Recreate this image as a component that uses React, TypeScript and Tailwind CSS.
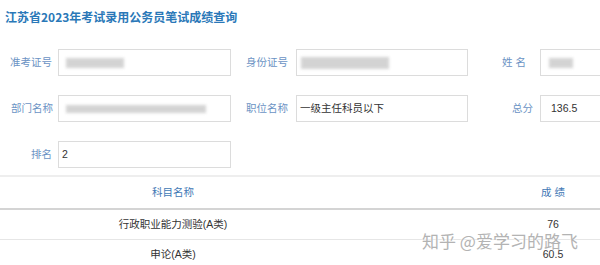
import React from 'react'

const font = "font-['Liberation_Sans','Noto_Sans_CJK_SC',sans-serif]"

function Blur({ w, h = 10, ml = 4 }: { w: number; h?: number; ml?: number }) {
  return (
    <div
      className="bg-[#c9c9c9] blur-[1.5px] opacity-80"
      style={{ width: w, height: h, marginLeft: ml }}
    />
  )
}

function Field({
  label,
  labelW,
  labelPr,
  inputW,
  children,
}: {
  label: string
  labelW: number
  labelPr: number
  inputW: number
  children?: React.ReactNode
}) {
  return (
    <div className="flex items-center shrink-0">
      <div
        className="text-right text-[10.5px] text-[#6b93c4] whitespace-pre"
        style={{ width: labelW, paddingRight: labelPr }}
      >
        {label}
      </div>
      <div
        className="h-[27px] border border-[#dcdcdc] flex items-center px-[3px] text-[10.5px] text-[#333] shrink-0"
        style={{ width: inputW }}
      >
        {children}
      </div>
    </div>
  )
}

export default function App() {
  return (
    <div className={`relative w-[600px] h-[265px] overflow-hidden bg-white ${font}`}>
      <h1 className="pl-[5px] pt-[9px] h-[49px] text-[12px] leading-[16px] font-bold text-[#2a78b8] font-['Noto_Sans_CJK_SC',sans-serif]">
        江苏省2023年考试录用公务员笔试成绩查询
      </h1>

      <div className="flex flex-col gap-[19px]">
        <div className="flex">
          <Field label="准考证号" labelW={58} labelPr={6} inputW={173}>
            <Blur w={58} />
          </Field>
          <Field label="身份证号" labelW={65} labelPr={8} inputW={172}>
            <Blur w={88} h={12} ml={1} />
          </Field>
          <Field label="姓 名" labelW={72} labelPr={14} inputW={120}>
            <Blur w={24} ml={5} />
          </Field>
        </div>
        <div className="flex">
          <Field label="部门名称" labelW={58} labelPr={5} inputW={173}>
            <Blur w={140} h={8} />
          </Field>
          <Field label="职位名称" labelW={65} labelPr={8} inputW={172}>
            一级主任科员以下
          </Field>
          <Field label="总分" labelW={72} labelPr={7} inputW={120}>
            <span className="pl-[7px]">136.5</span>
          </Field>
        </div>
        <div className="flex">
          <Field label="排名" labelW={58} labelPr={6} inputW={173}>
            2
          </Field>
        </div>
      </div>

      <div className="mt-[7px] w-[760px] border-t-2 border-[#eeeeee]">
        <div className="grid grid-cols-[346px_414px] h-[33px] items-center border-b-2 border-[#d4d4d4] text-[10.5px] text-[#3f78b5]">
          <div className="text-center">科目名称</div>
          <div className="text-center whitespace-pre">成 绩</div>
        </div>
        <div className="grid grid-cols-[346px_414px] h-[30px] items-center border-b border-[#e6e6e6] text-[10.5px] text-[#333]">
          <div className="text-center">行政职业能力测验(A类)</div>
          <div className="text-center">76</div>
        </div>
        <div className="grid grid-cols-[346px_414px] h-[30px] items-center text-[10.5px] text-[#333]">
          <div className="text-center">申论(A类)</div>
          <div className="text-center">60.5</div>
        </div>
      </div>

      <div className="absolute left-[422px] top-[230px] text-[17px] leading-[22px] text-[#b3b3b3] whitespace-nowrap font-['Noto_Sans_CJK_SC',sans-serif] [text-shadow:0_0_2px_#fff,0_0_2px_#fff]">
        知乎 @爱学习的路飞
      </div>
    </div>
  )
}
